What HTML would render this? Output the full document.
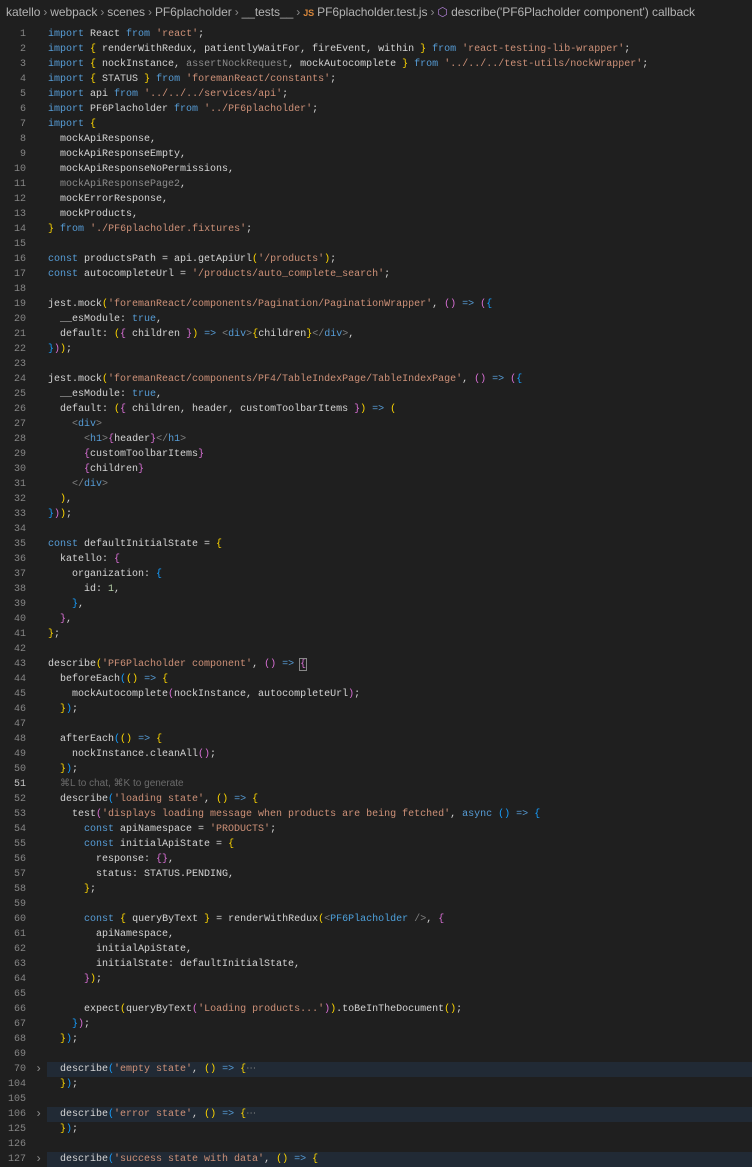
<!DOCTYPE html>
<html><head><meta charset="utf-8"><style>
html,body{margin:0;padding:0;background:#1f1f1f;width:752px;height:1156px;overflow:hidden}
.bc{position:absolute;left:6px;top:5px;font:12px "Liberation Sans",sans-serif;color:#b3b3b3;white-space:nowrap;letter-spacing:-0.05px}
.bc .sep{color:#8a8a8a;margin:0 3px}
.bc .js{color:#d8873c;font-size:9px;font-weight:bold;margin-right:3px}
.ed{position:absolute;top:27px;left:0;width:752px;font:10px/15px "Liberation Mono",monospace;color:#d4d4d4}
.l{height:15px;position:relative;white-space:pre}
.ln{position:absolute;left:0;width:26px;text-align:right;color:#858585}
.c{position:absolute;left:48px}
.fold::before{content:"";position:absolute;left:47px;right:0;top:0;bottom:0;background:#212a35}
.ar{position:absolute;left:35px;color:#8b8b8b;font-size:12px}
.k{color:#569cd6}.s{color:#ce9178}.y{color:#ffd700}.p{color:#da70d6}.b{color:#179fff}.g{color:#8c8c8c}.n{color:#b5cea8}.tg{color:#808080}.cm{color:#4ea1dc}
.hint{font:10px "Liberation Sans",sans-serif;color:#6b6b6b}
.box{outline:1px solid #888}
</style></head><body>
<div class="bc">katello<span class="sep">›</span>webpack<span class="sep">›</span>scenes<span class="sep">›</span>PF6placholder<span class="sep">›</span>__tests__<span class="sep">›</span><span class="js">JS</span>PF6placholder.test.js<span class="sep">›</span><span style="color:#b180d7">⬡</span> describe('PF6Placholder component') callback</div>
<div class="ed">
<div class="l"><span class="ln">1</span><span class="c"><span class="k">import</span> React <span class="k">from</span> <span class="s">'react'</span>;</span></div>
<div class="l"><span class="ln">2</span><span class="c"><span class="k">import</span> <span class="y">{</span> renderWithRedux, patientlyWaitFor, fireEvent, within <span class="y">}</span> <span class="k">from</span> <span class="s">'react-testing-lib-wrapper'</span>;</span></div>
<div class="l"><span class="ln">3</span><span class="c"><span class="k">import</span> <span class="y">{</span> nockInstance, <span class="g">assertNockRequest</span>, mockAutocomplete <span class="y">}</span> <span class="k">from</span> <span class="s">'../../../test-utils/nockWrapper'</span>;</span></div>
<div class="l"><span class="ln">4</span><span class="c"><span class="k">import</span> <span class="y">{</span> STATUS <span class="y">}</span> <span class="k">from</span> <span class="s">'foremanReact/constants'</span>;</span></div>
<div class="l"><span class="ln">5</span><span class="c"><span class="k">import</span> api <span class="k">from</span> <span class="s">'../../../services/api'</span>;</span></div>
<div class="l"><span class="ln">6</span><span class="c"><span class="k">import</span> PF6Placholder <span class="k">from</span> <span class="s">'../PF6placholder'</span>;</span></div>
<div class="l"><span class="ln">7</span><span class="c"><span class="k">import</span> <span class="y">{</span></span></div>
<div class="l"><span class="ln">8</span><span class="c">  mockApiResponse,</span></div>
<div class="l"><span class="ln">9</span><span class="c">  mockApiResponseEmpty,</span></div>
<div class="l"><span class="ln">10</span><span class="c">  mockApiResponseNoPermissions,</span></div>
<div class="l"><span class="ln">11</span><span class="c">  <span class="g">mockApiResponsePage2</span>,</span></div>
<div class="l"><span class="ln">12</span><span class="c">  mockErrorResponse,</span></div>
<div class="l"><span class="ln">13</span><span class="c">  mockProducts,</span></div>
<div class="l"><span class="ln">14</span><span class="c"><span class="y">}</span> <span class="k">from</span> <span class="s">'./PF6placholder.fixtures'</span>;</span></div>
<div class="l"><span class="ln">15</span></div>
<div class="l"><span class="ln">16</span><span class="c"><span class="k">const</span> productsPath = api.getApiUrl<span class="y">(</span><span class="s">'/products'</span><span class="y">)</span>;</span></div>
<div class="l"><span class="ln">17</span><span class="c"><span class="k">const</span> autocompleteUrl = <span class="s">'/products/auto_complete_search'</span>;</span></div>
<div class="l"><span class="ln">18</span></div>
<div class="l"><span class="ln">19</span><span class="c">jest.mock<span class="y">(</span><span class="s">'foremanReact/components/Pagination/PaginationWrapper'</span>, <span class="p">()</span> <span class="k">=&gt;</span> <span class="p">(</span><span class="b">{</span></span></div>
<div class="l"><span class="ln">20</span><span class="c">  __esModule: <span class="k">true</span>,</span></div>
<div class="l"><span class="ln">21</span><span class="c">  default: <span class="y">(</span><span class="p">{</span> children <span class="p">}</span><span class="y">)</span> <span class="k">=&gt;</span> <span class="tg">&lt;</span><span class="k">div</span><span class="tg">&gt;</span><span class="y">{</span>children<span class="y">}</span><span class="tg">&lt;/</span><span class="k">div</span><span class="tg">&gt;</span>,</span></div>
<div class="l"><span class="ln">22</span><span class="c"><span class="b">}</span><span class="p">)</span><span class="y">)</span>;</span></div>
<div class="l"><span class="ln">23</span></div>
<div class="l"><span class="ln">24</span><span class="c">jest.mock<span class="y">(</span><span class="s">'foremanReact/components/PF4/TableIndexPage/TableIndexPage'</span>, <span class="p">()</span> <span class="k">=&gt;</span> <span class="p">(</span><span class="b">{</span></span></div>
<div class="l"><span class="ln">25</span><span class="c">  __esModule: <span class="k">true</span>,</span></div>
<div class="l"><span class="ln">26</span><span class="c">  default: <span class="y">(</span><span class="p">{</span> children, header, customToolbarItems <span class="p">}</span><span class="y">)</span> <span class="k">=&gt;</span> <span class="y">(</span></span></div>
<div class="l"><span class="ln">27</span><span class="c">    <span class="tg">&lt;</span><span class="k">div</span><span class="tg">&gt;</span></span></div>
<div class="l"><span class="ln">28</span><span class="c">      <span class="tg">&lt;</span><span class="k">h1</span><span class="tg">&gt;</span><span class="p">{</span>header<span class="p">}</span><span class="tg">&lt;/</span><span class="k">h1</span><span class="tg">&gt;</span></span></div>
<div class="l"><span class="ln">29</span><span class="c">      <span class="p">{</span>customToolbarItems<span class="p">}</span></span></div>
<div class="l"><span class="ln">30</span><span class="c">      <span class="p">{</span>children<span class="p">}</span></span></div>
<div class="l"><span class="ln">31</span><span class="c">    <span class="tg">&lt;/</span><span class="k">div</span><span class="tg">&gt;</span></span></div>
<div class="l"><span class="ln">32</span><span class="c">  <span class="y">)</span>,</span></div>
<div class="l"><span class="ln">33</span><span class="c"><span class="b">}</span><span class="p">)</span><span class="y">)</span>;</span></div>
<div class="l"><span class="ln">34</span></div>
<div class="l"><span class="ln">35</span><span class="c"><span class="k">const</span> defaultInitialState = <span class="y">{</span></span></div>
<div class="l"><span class="ln">36</span><span class="c">  katello: <span class="p">{</span></span></div>
<div class="l"><span class="ln">37</span><span class="c">    organization: <span class="b">{</span></span></div>
<div class="l"><span class="ln">38</span><span class="c">      id: <span class="n">1</span>,</span></div>
<div class="l"><span class="ln">39</span><span class="c">    <span class="b">}</span>,</span></div>
<div class="l"><span class="ln">40</span><span class="c">  <span class="p">}</span>,</span></div>
<div class="l"><span class="ln">41</span><span class="c"><span class="y">}</span>;</span></div>
<div class="l"><span class="ln">42</span></div>
<div class="l"><span class="ln">43</span><span class="c">describe<span class="y">(</span><span class="s">'PF6Placholder component'</span>, <span class="p">()</span> <span class="k">=&gt;</span> <span class="p box">{</span></span></div>
<div class="l"><span class="ln">44</span><span class="c">  beforeEach<span class="b">(</span><span class="y">()</span> <span class="k">=&gt;</span> <span class="y">{</span></span></div>
<div class="l"><span class="ln">45</span><span class="c">    mockAutocomplete<span class="p">(</span>nockInstance, autocompleteUrl<span class="p">)</span>;</span></div>
<div class="l"><span class="ln">46</span><span class="c">  <span class="y">}</span><span class="b">)</span>;</span></div>
<div class="l"><span class="ln">47</span></div>
<div class="l"><span class="ln">48</span><span class="c">  afterEach<span class="b">(</span><span class="y">()</span> <span class="k">=&gt;</span> <span class="y">{</span></span></div>
<div class="l"><span class="ln">49</span><span class="c">    nockInstance.cleanAll<span class="p">()</span>;</span></div>
<div class="l"><span class="ln">50</span><span class="c">  <span class="y">}</span><span class="b">)</span>;</span></div>
<div class="l"><span class="ln" style="color:#c6c6c6">51</span><span class="c">  <span class="hint">⌘L to chat, ⌘K to generate</span></span></div>
<div class="l"><span class="ln">52</span><span class="c">  describe<span class="b">(</span><span class="s">'loading state'</span>, <span class="y">()</span> <span class="k">=&gt;</span> <span class="y">{</span></span></div>
<div class="l"><span class="ln">53</span><span class="c">    test<span class="p">(</span><span class="s">'displays loading message when products are being fetched'</span>, <span class="k">async</span> <span class="b">()</span> <span class="k">=&gt;</span> <span class="b">{</span></span></div>
<div class="l"><span class="ln">54</span><span class="c">      <span class="k">const</span> apiNamespace = <span class="s">'PRODUCTS'</span>;</span></div>
<div class="l"><span class="ln">55</span><span class="c">      <span class="k">const</span> initialApiState = <span class="y">{</span></span></div>
<div class="l"><span class="ln">56</span><span class="c">        response: <span class="p">{}</span>,</span></div>
<div class="l"><span class="ln">57</span><span class="c">        status: STATUS.PENDING,</span></div>
<div class="l"><span class="ln">58</span><span class="c">      <span class="y">}</span>;</span></div>
<div class="l"><span class="ln">59</span></div>
<div class="l"><span class="ln">60</span><span class="c">      <span class="k">const</span> <span class="y">{</span> queryByText <span class="y">}</span> = renderWithRedux<span class="y">(</span><span class="tg">&lt;</span><span class="cm">PF6Placholder</span> <span class="tg">/&gt;</span>, <span class="p">{</span></span></div>
<div class="l"><span class="ln">61</span><span class="c">        apiNamespace,</span></div>
<div class="l"><span class="ln">62</span><span class="c">        initialApiState,</span></div>
<div class="l"><span class="ln">63</span><span class="c">        initialState: defaultInitialState,</span></div>
<div class="l"><span class="ln">64</span><span class="c">      <span class="p">}</span><span class="y">)</span>;</span></div>
<div class="l"><span class="ln">65</span></div>
<div class="l"><span class="ln">66</span><span class="c">      expect<span class="y">(</span>queryByText<span class="p">(</span><span class="s">'Loading products...'</span><span class="p">)</span><span class="y">)</span>.toBeInTheDocument<span class="y">()</span>;</span></div>
<div class="l"><span class="ln">67</span><span class="c">    <span class="b">}</span><span class="p">)</span>;</span></div>
<div class="l"><span class="ln">68</span><span class="c">  <span class="y">}</span><span class="b">)</span>;</span></div>
<div class="l"><span class="ln">69</span></div>
<div class="l fold"><span class="ln">70</span><span class="ar">›</span><span class="c">  describe<span class="b">(</span><span class="s">'empty state'</span>, <span class="y">()</span> <span class="k">=&gt;</span> <span class="y">{</span><span class="g">⋯</span></span></div>
<div class="l"><span class="ln">104</span><span class="c">  <span class="y">}</span><span class="b">)</span>;</span></div>
<div class="l"><span class="ln">105</span></div>
<div class="l fold"><span class="ln">106</span><span class="ar">›</span><span class="c">  describe<span class="b">(</span><span class="s">'error state'</span>, <span class="y">()</span> <span class="k">=&gt;</span> <span class="y">{</span><span class="g">⋯</span></span></div>
<div class="l"><span class="ln">125</span><span class="c">  <span class="y">}</span><span class="b">)</span>;</span></div>
<div class="l"><span class="ln">126</span></div>
<div class="l fold"><span class="ln">127</span><span class="ar">›</span><span class="c">  describe<span class="b">(</span><span class="s">'success state with data'</span>, <span class="y">()</span> <span class="k">=&gt;</span> <span class="y">{</span></span></div>
</div>
</body></html>
